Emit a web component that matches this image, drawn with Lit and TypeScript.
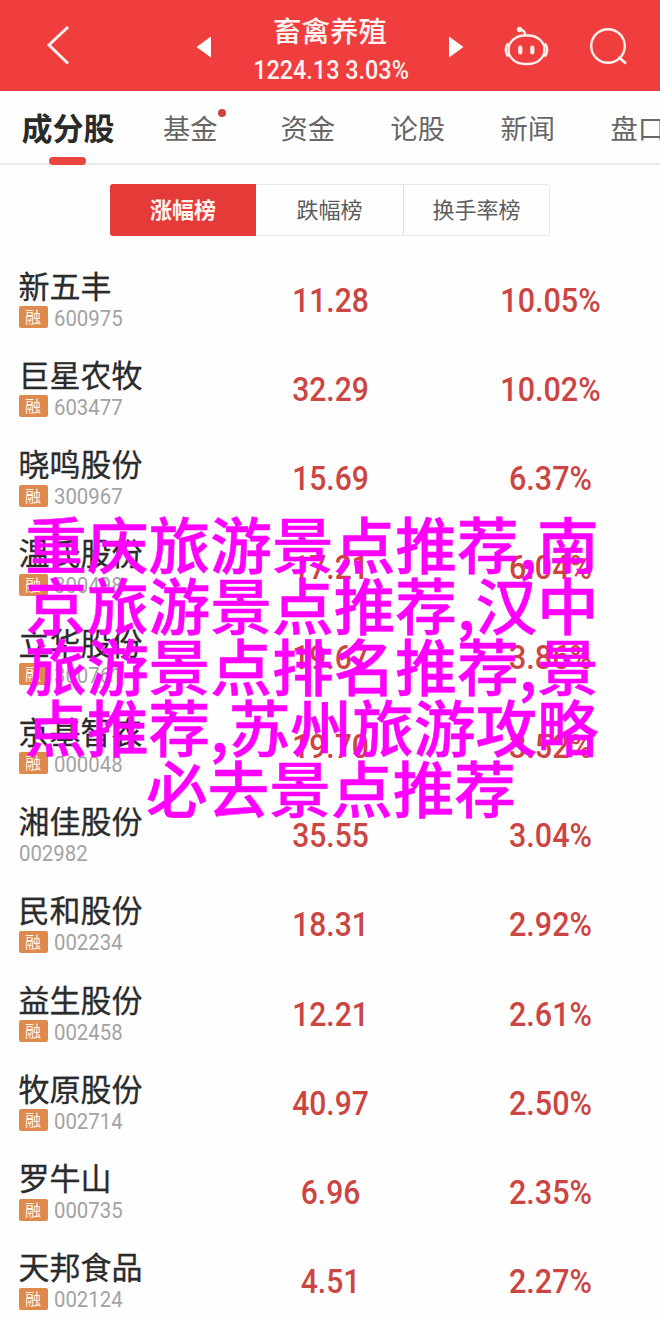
import { LitElement, html, css, nothing } from "lit";
import { customElement } from "lit/decorators.js";

interface Stock {
  name: string;
  code: string;
  price: string;
  change: string;
  margin: boolean;
}

const STOCKS: Stock[] = [
  { name: "新五丰", code: "600975", price: "11.28", change: "10.05%", margin: true },
  { name: "巨星农牧", code: "603477", price: "32.29", change: "10.02%", margin: true },
  { name: "晓鸣股份", code: "300967", price: "15.69", change: "6.37%", margin: true },
  { name: "温氏股份", code: "300498", price: "17.21", change: "6.04%", margin: true },
  { name: "立华股份", code: "300761", price: "19.67", change: "3.86%", margin: true },
  { name: "京基智农", code: "000048", price: "19.70", change: "3.52%", margin: true },
  { name: "湘佳股份", code: "002982", price: "35.55", change: "3.04%", margin: false },
  { name: "民和股份", code: "002234", price: "18.31", change: "2.92%", margin: true },
  { name: "益生股份", code: "002458", price: "12.21", change: "2.61%", margin: true },
  { name: "牧原股份", code: "002714", price: "40.97", change: "2.50%", margin: true },
  { name: "罗牛山", code: "000735", price: "6.96", change: "2.35%", margin: true },
  { name: "天邦食品", code: "002124", price: "4.51", change: "2.27%", margin: true },
];

const CAPTION = [
  "重庆旅游景点推荐,南",
  "京旅游景点推荐,汉中",
  "旅游景点排名推荐,景",
  "点推荐,苏州旅游攻略",
  "必去景点推荐",
];

@customElement("stock-row")
class StockRow extends LitElement {
  static properties = { stock: { attribute: false } };
  declare stock: Stock;

  static styles = css`
    :host {
      display: grid;
      grid-template-columns: 220px 221px 219px;
      height: 89.27px;
      box-sizing: border-box;
    }
    .id { padding-left: 18.5px; }
    .name {
      height: 44px;
      line-height: 41px;
      font-size: 31px;
      color: #2b2b2b;
      -webkit-text-stroke: 0.3px #2b2b2b;
      white-space: nowrap;
    }
    .meta {
      display: flex;
      align-items: center;
      height: 23px;
      margin-top: -2px;
    }
    .badge {
      width: 29px;
      height: 22px;
      line-height: 21px;
      margin-right: 6px;
      border-radius: 2px;
      background: #de8a4c;
      color: #fff3e6;
      font-size: 16px;
      text-align: center;
    }
    .code {
      font: 400 22px/23px Roboto, sans-serif;
      color: #a3a3a3;
      transform: translateY(0.5px) scaleX(0.925);
      transform-origin: left;
    }
    .num {
      font: 500 33px/36px Roboto, sans-serif;
      color: #cb4542;
      text-align: center;
      padding-top: 19px;
      transform: scaleX(0.91);
    }
    .num + .num { transform: scaleX(0.925); }
  `;

  render() {
    const s = this.stock;
    return html`
      <div class="id">
        <div class="name">${s.name}</div>
        <div class="meta">
          ${s.margin ? html`<span class="badge">融</span>` : nothing}
          <span class="code">${s.code}</span>
        </div>
      </div>
      <div class="num">${s.price}</div>
      <div class="num">${s.change}</div>
    `;
  }
}

@customElement("app-root")
class AppRoot extends LitElement {
  static styles = css`
    :host {
      display: block;
      position: relative;
      width: 660px;
      height: 1321px;
      overflow: hidden;
      background: #fefefe;
      font-family: "Noto Sans CJK SC", sans-serif;
    }
    .header {
      display: grid;
      grid-template-columns: 190px 280px 100px 90px;
      height: 91px;
      background: #f03d3d;
      color: #fff4f1;
    }
    .icon { display: block; }
    .middle { display: flex; justify-content: space-between; }
    .title { display: flex; flex-direction: column; align-items: center; }
    .sector {
      height: 40px;
      line-height: 40px;
      padding-top: 10px;
      font-size: 28.5px;
      font-weight: 500;
      white-space: nowrap;
    }
    .index {
      font: 500 26px/30px Roboto, sans-serif;
      padding-top: 5px;
      white-space: nowrap;
      transform: translateX(1.5px) scaleX(0.9);
      margin: 0 -12px;
    }
    .tabs {
      display: flex;
      height: 74px;
      box-sizing: border-box;
      border-bottom: 2px solid #ececec;
      color: #666;
      font-size: 27.3px;
      line-height: 72px;
      white-space: nowrap;
    }
    .tab { flex: none; width: 110px; position: relative; }
    .tab.active {
      width: 141.5px;
      padding-left: 21.5px;
      font-size: 31px;
      font-weight: 700;
      color: #2a2a2a;
    }
    .tab.active::after {
      content: "";
      position: absolute;
      left: 49px;
      top: 66px;
      width: 37px;
      height: 8px;
      border-radius: 4px;
      background: #e8453f;
    }
    .tab.fund { width: 117.5px; }
    .dot {
      position: absolute;
      left: 55px;
      top: 18px;
      width: 8px;
      height: 8px;
      border-radius: 50%;
      background: #cf4040;
    }
    .segment {
      display: grid;
      grid-template-columns: 145px 147px 146px;
      width: 440px;
      height: 52px;
      margin: 18.5px auto 0;
      box-sizing: border-box;
      border: 1px solid #e8e8e8;
      border-radius: 3px;
      font-size: 22px;
      line-height: 47px;
      text-align: center;
      color: #5c5c5c;
    }
    .seg + .seg + .seg { border-left: 1px solid #dedede; }
    .seg.on {
      margin: -1px 0 -1px -1px;
      line-height: 49px;
      background: #e53b38;
      color: #fff4f1;
      font-weight: 700;
      border-radius: 3px 0 0 3px;
    }
    .list { padding-top: 28px; }
    .caption {
      position: absolute;
      left: 0;
      top: 512px;
      width: 624px;
      text-align: center;
      font-size: 61.7px;
      line-height: 61.1px;
      font-weight: 500;
      color: #ff00ff;
      -webkit-text-stroke: 0.5px #ff00ff;
      white-space: nowrap;
    }
    .last { padding-left: 38px; }
  `;

  render() {
    return html`
      <div class="header">
        <svg class="icon" width="190" height="91" viewBox="0 0 190 91" fill="none" stroke="#fff0ec" stroke-width="3">
          <path d="M68 27 49 45 68 63.500" />
        </svg>
        <div class="middle">
          <svg class="icon" width="30" height="91" viewBox="0 0 30 91"><path d="M6.500 47 21 36.500V57.500Z" fill="#fff" /></svg>
          <div class="title">
            <div class="sector">畜禽养殖</div>
            <div class="index">1224.13 3.03%</div>
          </div>
          <svg class="icon" width="30" height="91" viewBox="0 0 30 91"><path d="M23.500 47 9 36.500V57.500Z" fill="#fff" /></svg>
        </div>
        <svg class="icon" width="100" height="91" viewBox="470 0 100 91" fill="none" stroke="#fff0ec" stroke-width="2.400">
          <rect x="508.500" y="35.500" width="36" height="28.500" rx="16" ry="14" />
          <path d="M508.500 43.500C505 46 505 54 508.500 56.500M544.500 43.500C548 46 548 54 544.500 56.500" />
          <path d="M525.500 35.500C525 31.500 522.500 29.500 519 29.500" />
          <circle cx="519.500" cy="29.500" r="2.700" fill="#fff0ec" stroke="none" />
          <path d="M520.300 47.500V52.500M532.300 47.500V52.500" stroke-width="4.200" stroke-linecap="round" />
        </svg>
        <svg class="icon" width="90" height="91" viewBox="570 0 90 91" fill="none" stroke="#fff0ec" stroke-width="2.400">
          <circle cx="608" cy="46" r="16.800" />
          <path d="M618.500 57 626 63.500" stroke-width="2.800" />
        </svg>
      </div>
      <div class="tabs">
        <div class="tab active">成分股</div>
        <div class="tab fund">基金<span class="dot"></span></div>
        <div class="tab">资金</div>
        <div class="tab">论股</div>
        <div class="tab">新闻</div>
        <div class="tab">盘口</div>
      </div>
      <div class="segment">
        <div class="seg on">涨幅榜</div>
        <div class="seg">跌幅榜</div>
        <div class="seg">换手率榜</div>
      </div>
      <div class="list">${STOCKS.map((s) => html`<stock-row .stock=${s}></stock-row>`)}</div>
      <div class="caption">
        ${CAPTION.map((line, i) => html`<div class=${i === 4 ? "last" : ""}>${line}</div>`)}
      </div>
    `;
  }
}
